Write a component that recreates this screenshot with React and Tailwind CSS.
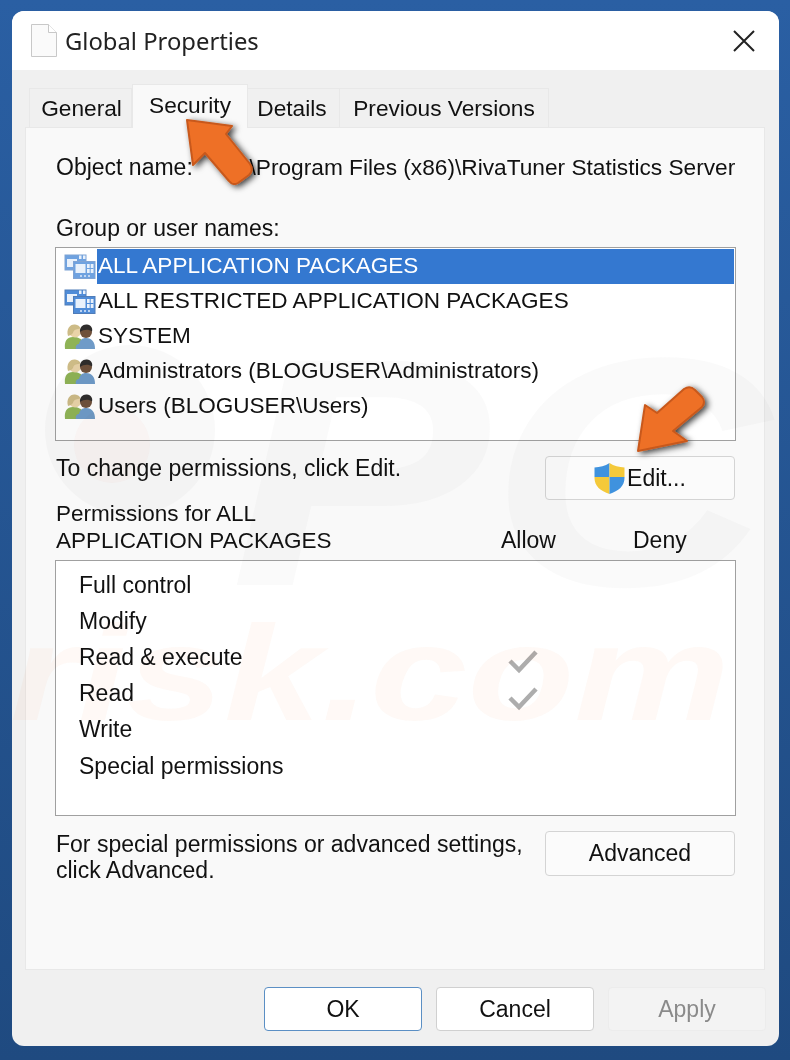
const font = "font-['Liberation_Sans',Arial,sans-serif]";

const permissions = [
  { name: 'Full control' },
  { name: 'Modify' },
  { name: 'Read & execute', allow: true },
  { name: 'Read', allow: true },
  { name: 'Write' },
  { name: 'Special permissions' },
];

const principals = [
  { name: 'ALL APPLICATION PACKAGES', kind: 'app', selected: true },
  { name: 'ALL RESTRICTED APPLICATION PACKAGES', kind: 'app' },
  { name: 'SYSTEM', kind: 'user' },
  { name: 'Administrators (BLOGUSER\\Administrators)', kind: 'user' },
  { name: 'Users (BLOGUSER\\Users)', kind: 'user' },
];

function FileIcon() {
  return (
    <svg width="26" height="33" viewBox="0 0 26 33" className="shrink-0">
      <path d="M.5.5h17l8 8v24H.5z" fill="#fafafa" stroke="#c8c8c8" />
      <path d="M17.5.5v8h8" fill="#fff" stroke="#c8c8c8" />
    </svg>
  );
}

function AppIcon({ faded }) {
  const stroke = faded ? '#7fa3d4' : '#4f7cb8';
  const fill = faded ? '#6fa2e0' : '#4f8cd8';
  return (
    <svg width="32" height="26" viewBox="0 0 32 26" className="shrink-0">
      <rect x="1" y="1" width="21" height="15" fill={fill} stroke={stroke} />
      <rect x="3" y="5" width="10" height="8" fill="#e9f1fb" />
      <rect x="15" y="1.5" width="2.5" height="3.5" fill="#e9f1fb" />
      <rect x="19" y="1.5" width="2.5" height="3.5" fill="#e9f1fb" />
      <rect x="9.5" y="7.5" width="21.5" height="17" fill={fill} stroke={stroke} />
      <rect x="11.5" y="10" width="10" height="9" fill="#e9f1fb" />
      <rect x="23" y="10" width="6.5" height="9" fill="#e9f1fb" />
      <path d="M23 14.5h6.5M26.2 10v9" stroke={fill} />
      <path d="M16 22h2M20 22h2M24 22h2" stroke="#dfeafa" strokeWidth="1.5" />
    </svg>
  );
}

function UsersIcon() {
  return (
    <svg width="31" height="26" viewBox="0 0 31 26" className="shrink-0">
      <path d="M1 25c-1-8 2-12 8-12 5 0 9 2 10 5l-2 7z" fill="#8fb356" />
      <circle cx="11" cy="7.500" r="6" fill="#e9d3a8" />
      <path d="M4 12C2 5 6 0 11 .5c3 .3 5 2 5.500 4-4 .5-6 1-7 3-.6 1.500-1 3.500-5.500 4.500z" fill="#cdbb86" />
      <path d="M12 25c-1-3 1-5 3-5 1-4 3-6 7-6 6 0 9 4 9 11z" fill="#6f9bc8" />
      <circle cx="22" cy="8" r="6" fill="#6f513b" />
      <path d="M16 8c-.5-5 3-8 7-7.500s6 3.500 5 7c-3-2.500-8-2.500-12 .5z" fill="#2f2d2c" />
    </svg>
  );
}

function Shield() {
  return (
    <svg width="31" height="31" viewBox="0 0 31 31" className="shrink-0">
      <defs>
        <clipPath id="shield">
          <path d="M15.500 0C11 3 6 4 .5 4.500V15c0 8 6 13 15 16 9-3 15-8 15-16V4.500C25 4 20 3 15.500 0z" />
        </clipPath>
      </defs>
      <g clipPath="url(#shield)">
        <rect width="15.500" height="14" fill="#3f92de" />
        <rect x="15.500" width="15.500" height="14" fill="#f4c93a" />
        <rect y="14" width="15.500" height="17" fill="#f4c93a" />
        <rect x="15.500" y="14" width="15.500" height="17" fill="#3f92de" />
      </g>
    </svg>
  );
}

function Check() {
  return (
    <svg width="32" height="26" viewBox="0 0 32 26" className="mt-[8px]">
      <path d="M3 13l9 9L29 4" fill="none" stroke="#adadad" strokeWidth="4.500" />
    </svg>
  );
}

function Tab({ label, selected, width }) {
  if (selected) {
    return (
      <div className="z-10 -mb-px flex h-[44px] w-[116px] items-start justify-center border border-b-0 border-[#e8e8e8] bg-[#f9f9f9] pt-[9px]">
        {label}
      </div>
    );
  }
  return (
    <div className={`flex h-[39px] items-center justify-center border border-b-0 border-l-0 border-[#e8e8e8] bg-[#f0f0f0] first:border-l ${width}`}>
      {label}
    </div>
  );
}

function Overlay() {
  return (
    <svg width="790" height="1060" viewBox="0 0 790 1060" className="pointer-events-none absolute top-0 left-0 z-20">
      <defs>
        <filter id="soft" x="-30%" y="-30%" width="160%" height="160%">
          <feDropShadow dx="3" dy="2" stdDeviation="3" floodColor="#000" floodOpacity="0.75" />
        </filter>
      </defs>
      <g fill="#ee7026" stroke="#c8591c" strokeWidth="2" strokeLinejoin="round" filter="url(#soft)">
        <path d="M187 120 232 126 226 134 250 164Q254 170 249 175L238 183Q233 186 229 181L205 153 193 165Z" />
        <path d="M638 451 687 441 673 431 702 407Q706 402 702 397L695 390Q690 385 684 389L657 413 645 405Z" />
      </g>
    </svg>
  );
}

function Watermark() {
  return (
    <svg width="790" height="1060" viewBox="0 0 790 1060" className="pointer-events-none absolute top-0 left-0 z-10 mix-blend-multiply">
      <circle cx="130" cy="430" r="85" fill="#a8a8b0" opacity="0.07" />
      <circle cx="112" cy="445" r="38" fill="#f0a080" opacity="0.06" />
      <text x="230" y="585" textLength="540" lengthAdjust="spacingAndGlyphs" fontFamily="Liberation Sans" fontWeight="700" fontStyle="italic" fontSize="326" fill="#8a8a8a" opacity="0.04">PC</text>
      <text x="10" y="720" textLength="720" lengthAdjust="spacingAndGlyphs" fontFamily="Liberation Sans" fontWeight="700" fontStyle="italic" fontSize="135" fill="#f0915a" opacity="0.05">risk.com</text>
    </svg>
  );
}

export default function App() {
  return (
    <div className={`${font} relative h-[1060px] w-[790px] overflow-hidden bg-gradient-to-b from-[#2a5fa3] to-[#1f4a80] pt-[11px] pl-[12px] text-[23px] leading-none text-[#111]`}>
      <div className="flex h-[1035px] w-[767px] flex-col overflow-hidden rounded-[12px] bg-[#f0f0f0]">
        <div className="flex h-[59px] shrink-0 items-center bg-white pr-[24px] pl-[19px]">
          <FileIcon />
          <span className="mt-[2px] ml-[8px] font-['Noto_Sans',sans-serif] text-[23.800px] text-[#222]">Global Properties</span>
          <svg width="22" height="22" viewBox="0 0 22 22" className="ml-auto">
            <path d="M1 1l20 20M21 1L1 21" stroke="#222" strokeWidth="2" fill="none" />
          </svg>
        </div>

        <div className="flex h-[976px] shrink-0 flex-col px-[13px]">
          <div className="mt-[14px] flex h-[43px] shrink-0 items-end pl-[4px] text-[22.700px]">
            <Tab label="General" width="w-[103px] pl-[2px]" />
            <Tab label="Security" selected />
            <Tab label="Details" width="w-[92px] pr-[3px]" />
            <Tab label="Previous Versions" width="w-[209px]" />
          </div>

          <div className="flex h-[843px] w-[740px] shrink-0 flex-col border border-[#e8e8e8] bg-[#f9f9f9] pr-[29px] pl-[30px]">
            <div className="mt-[26px] flex h-[26px] items-center overflow-hidden">
              <span className="shrink-0">Object name:</span>
              <span className="ml-[34px] text-[22.700px] whitespace-nowrap">C:\Program Files (x86)\RivaTuner Statistics Server</span>
            </div>

            <div className="mt-[37px] flex h-[22px] items-center">Group or user names:</div>

            <div className="mt-[8px] -ml-px h-[194px] w-[681px] border border-[#a0a0a0] bg-white pt-px pr-px pl-[8px] text-[22.550px]">
              {principals.map((p) => (
                <div key={p.name} className="flex h-[35px] items-center">
                  <div className="flex w-[33px] shrink-0 items-center">
                    {p.kind === 'app' ? <AppIcon faded={p.selected} /> : <UsersIcon />}
                  </div>
                  <div className={`flex h-full flex-1 items-center pl-[1px] ${p.selected ? 'bg-[#3478d0] text-white' : ''}`}>
                    {p.name}
                  </div>
                </div>
              ))}
            </div>

            <div className="mt-[15px] flex h-[44px] justify-between">
              <span className="mt-[1px]">To change permissions, click Edit.</span>
              <div className="flex h-[44px] w-[190px] items-center justify-center rounded-[4px] border border-[#d4d4d4] bg-[#fbfbfb]">
                <Shield />
                <span className="ml-[2px]">Edit...</span>
              </div>
            </div>

            <div className="mt-[4px] flex h-[50px] items-end leading-[27px]">
              <div className="w-[445px] text-[22.500px]">
                Permissions for ALL
                <br />
                APPLICATION PACKAGES
              </div>
              <div className="w-[54px]">Allow</div>
              <div className="ml-[78px]">Deny</div>
            </div>

            <div className="mt-[6px] -ml-px h-[256px] w-[681px] border border-[#a0a0a0] bg-white pt-[6px] pr-[196px] pl-[23px]">
              {permissions.map((p) => (
                <div key={p.name} className="flex h-[36.200px] items-center justify-between">
                  <span>{p.name}</span>
                  {p.allow && <Check />}
                </div>
              ))}
            </div>

            <div className="mt-[15px] flex h-[45px] justify-between">
              <div className="leading-[26px]">
                For special permissions or advanced settings,
                <br />
                click Advanced.
              </div>
              <div className="flex h-[45px] w-[190px] items-center justify-center rounded-[4px] border border-[#d4d4d4] bg-[#fbfbfb]">
                Advanced
              </div>
            </div>
          </div>

          <div className="mt-[17px] flex justify-end gap-[14px]">
            <div className="flex h-[44px] w-[158px] items-center justify-center rounded-[4px] border border-[#5b8fc4] bg-white">OK</div>
            <div className="flex h-[44px] w-[158px] items-center justify-center rounded-[4px] border border-[#d0d0d0] bg-white">Cancel</div>
            <div className="flex h-[44px] w-[158px] items-center justify-center rounded-[4px] border border-[#ececec] bg-[#f3f3f3] text-[#8a8a8a]">Apply</div>
          </div>
        </div>
      </div>
      <Watermark />
      <Overlay />
    </div>
  );
}
